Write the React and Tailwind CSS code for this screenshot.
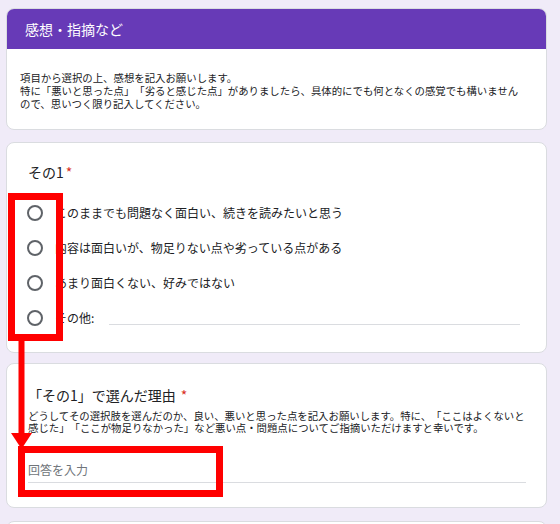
const Radio = () => (
  <div className="w-[16px] h-[16px] rounded-full border-2 border-[#5f6368] shrink-0"></div>
);

const options = [
  "このままでも問題なく面白い、続きを読みたいと思う",
  "内容は面白いが、物足りない点や劣っている点がある",
  "あまり面白くない、好みではない",
];

export default function App() {
  return (
    <div className="relative h-[524px] overflow-hidden bg-[#f0ebf8] pl-[6px] pr-[13px] pt-[8px] text-[#202124] [text-spacing-trim:space-all] font-['Noto_Sans_CJK_JP','Noto_Sans',sans-serif]">
      {/* Section header */}
      <div className="h-[122px] rounded-[8px] border border-[#dadce0] bg-white overflow-hidden">
        <div className="h-[40px] bg-[#673ab7] flex items-center pl-[18px] text-white text-[14px]">
          感想・指摘など
        </div>
        <div className="pl-[13px] pr-[22px] pt-[22px] text-[10.4px] leading-[13px]">
          <p>項目から選択の上、感想を記入お願いします。</p>
          <p>
            特に「悪いと思った点」「劣ると感じた点」がありましたら、具体的にでも何となくの感覚でも構いませんので、思いつく限り記入してください。
          </p>
        </div>
      </div>

      {/* Question 1 */}
      <div className="mt-[12px] h-[211px] rounded-[8px] border border-[#dadce0] bg-white pl-[20px] pr-[26px] pt-[19px]">
        <div className="text-[14px] leading-[20px] pl-[1px]">
          その1<span className="text-[#d93025] ml-[2px]">*</span>
        </div>
        <div className="mt-[13px] flex flex-col">
          {options.map((o) => (
            <div key={o} className="h-[35px] flex items-center gap-[12px] text-[12px]">
              <Radio />
              <span>{o}</span>
            </div>
          ))}
          <div className="h-[35px] flex items-center gap-[12px] text-[12px]">
            <Radio />
            <span>その他:</span>
            <div className="ml-[3px] flex-1 h-[1px] bg-[#dadce0] mt-[14px]"></div>
          </div>
        </div>
      </div>

      {/* Question 2 */}
      <div className="mt-[10px] h-[145px] rounded-[8px] border border-[#dadce0] bg-white pl-[21px] pr-[18px] pt-[21px]">
        <div className="text-[14px] leading-[20px]">
          「その1」で選んだ理由<span className="text-[#d93025] ml-[5px]">*</span>
        </div>
        <p className="mt-[5px] text-[10.4px] leading-[12px]">
          どうしてその選択肢を選んだのか、良い、悪いと思った点を記入お願いします。特に、「ここはよくないと感じた」「ここが物足りなかった」など悪い点・問題点についてご指摘いただけますと幸いです。
        </p>
        <div className="mt-[28px] mr-[2px] pb-[4px] border-b border-[#dadce0] text-[12px] leading-[16px] text-[#70757a]">
          回答を入力
        </div>
      </div>

      <div className="mt-[13px] h-[40px] rounded-[8px] border border-[#dadce0] bg-white"></div>

      {/* red annotations */}
      <svg className="absolute left-0 top-0 pointer-events-none" width="560" height="524" viewBox="0 0 560 524">
        <rect x="11.5" y="196.5" width="48" height="141" fill="none" stroke="#ff0000" strokeWidth="7" />
        <rect x="18.5" y="340" width="6" height="94" fill="#ff0000" />
        <polygon points="11,433 32,433 21.5,449" fill="#ff0000" />
        <rect x="21.5" y="449.5" width="198" height="44" fill="none" stroke="#ff0000" strokeWidth="7" />
      </svg>
    </div>
  );
}
